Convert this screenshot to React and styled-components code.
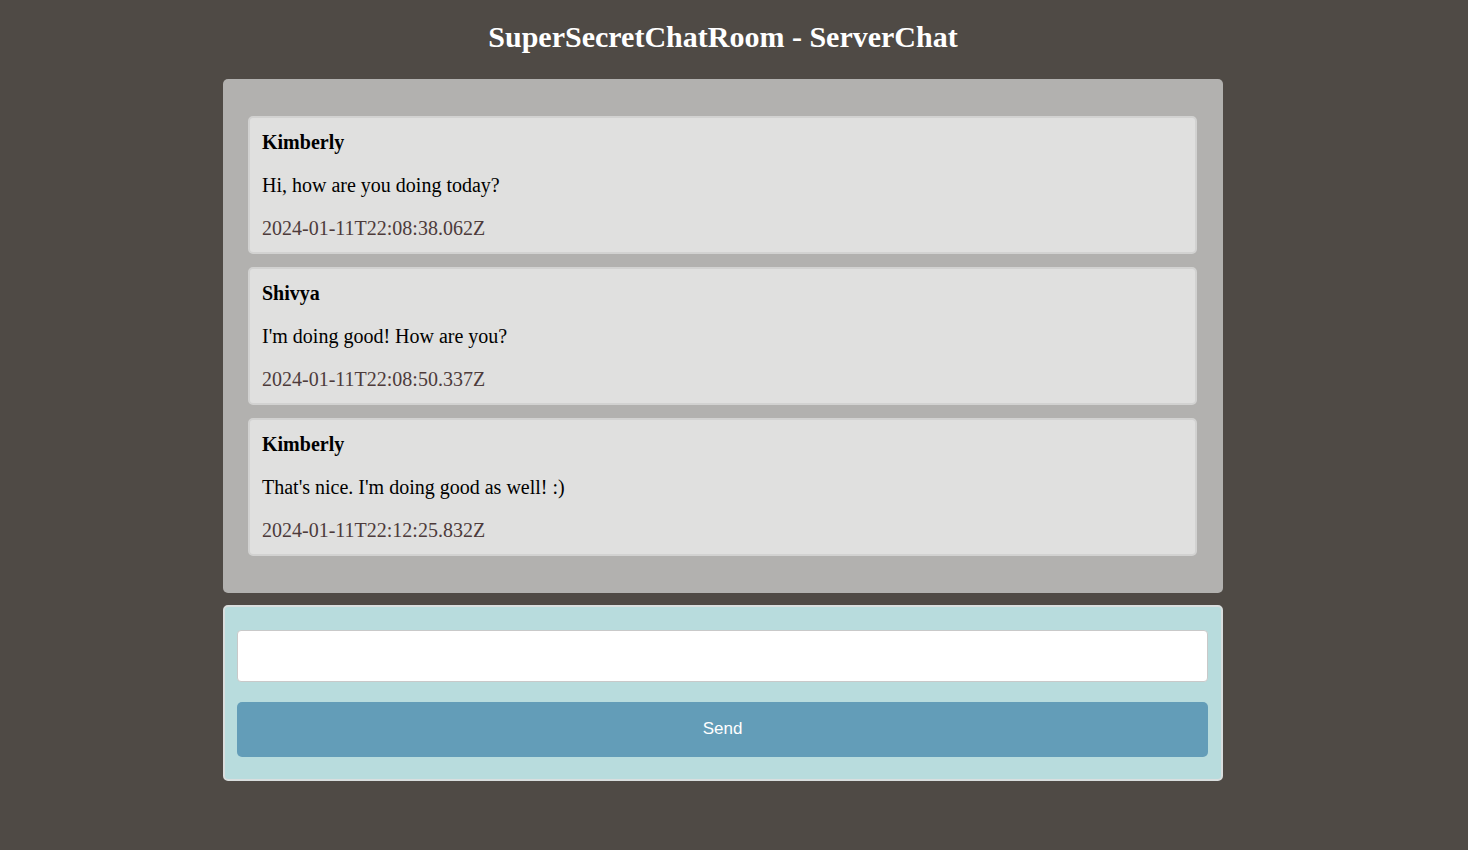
import React, { useState } from "react";
import styled, { createGlobalStyle } from "styled-components";

const GlobalStyle = createGlobalStyle`
  html, body {
    margin: 0;
    padding: 0;
    background: #4f4a45;
  }
  body {
    font-family: "Liberation Serif", "Times New Roman", serif;
  }
`;

const Page = styled.div`
  min-height: 850px;
  padding: 0 22px 0 0;
  box-sizing: border-box;
`;

const Title = styled.h1`
  margin: 0;
  padding: 19px 0 0;
  height: 79px;
  box-sizing: border-box;
  text-align: center;
  color: #fff;
  font-size: 30px;
  line-height: 35px;
  font-weight: 700;
`;

const Main = styled.main`
  width: 1000px;
  margin: 0 auto;
  display: flex;
  flex-direction: column;
  gap: 12px;
`;

const ChatBox = styled.section`
  background: #b2b1af;
  border-radius: 5px;
  padding: 37px 26px 37px 25px;
  display: flex;
  flex-direction: column;
  gap: 13px;
`;

const Message = styled.article`
  background: #e0e0df;
  border: 2px solid #d2d2d1;
  border-radius: 5px;
  padding: 13px 12px 12px;
  display: flex;
  flex-direction: column;
  gap: 20px;
  font-size: 20px;
`;

const Line = styled.p`
  margin: 0;
  line-height: 23px;
  color: ${(p) => p.$color || "#000"};
  font-weight: ${(p) => (p.$bold ? 700 : 400)};
`;

const Composer = styled.form`
  background: #b8dcdd;
  border: 2px solid #d9dede;
  border-radius: 5px;
  padding: 23px 13px 22px 12px;
  display: flex;
  flex-direction: column;
  gap: 20px;
`;

const Input = styled.input`
  height: 52px;
  box-sizing: border-box;
  border: 1px solid #c9c9c9;
  border-radius: 4px;
  background: #fff;
  padding: 0 12px;
  font-size: 16px;
  outline: none;
`;

const SendButton = styled.button`
  height: 55px;
  border: 0;
  border-radius: 5px;
  background: #639db8;
  color: #fff;
  font-family: "Liberation Sans", Arial, sans-serif;
  font-size: 17px;
  line-height: 20px;
  padding: 0 0 2px;
  cursor: pointer;
`;

const messages = [
  { id: 1, user: "Kimberly", text: "Hi, how are you doing today?", time: "2024-01-11T22:08:38.062Z" },
  { id: 2, user: "Shivya", text: "I'm doing good! How are you?", time: "2024-01-11T22:08:50.337Z" },
  { id: 3, user: "Kimberly", text: "That's nice. I'm doing good as well! :)", time: "2024-01-11T22:12:25.832Z" },
];

export default function App() {
  const [draft, setDraft] = useState("");

  return (
    <Page>
      <GlobalStyle />
      <Title>SuperSecretChatRoom - ServerChat</Title>
      <Main>
        <ChatBox>
          {messages.map((m) => (
            <Message key={m.id}>
              <Line $bold>{m.user}</Line>
              <Line>{m.text}</Line>
              <Line $color="#4d3b3b">{m.time}</Line>
            </Message>
          ))}
        </ChatBox>
        <Composer onSubmit={(e) => e.preventDefault()}>
          <Input value={draft} onChange={(e) => setDraft(e.target.value)} />
          <SendButton type="submit">Send</SendButton>
        </Composer>
      </Main>
    </Page>
  );
}
